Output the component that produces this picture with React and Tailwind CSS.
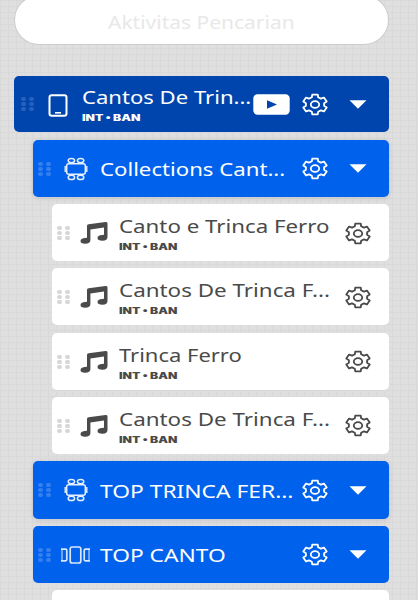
import { useLayoutEffect, useRef } from "react";
import clsx from "clsx";

const rows = [
  { type: "playlist", icon: "phone", title: "Cantos De Trin...", width: 169, sub: true },
  { type: "group", icon: "table", title: "Collections Cant...", width: 185 },
  { type: "song", icon: "music", title: "Canto e Trinca Ferro", width: 210, sub: true },
  { type: "song", icon: "music", title: "Cantos De Trinca F...", width: 211, sub: true },
  { type: "song", icon: "music", title: "Trinca Ferro", width: 123, sub: true },
  { type: "song", icon: "music", title: "Cantos De Trinca F...", width: 211, sub: true },
  { type: "group", icon: "table", title: "TOP TRINCA FER...", width: 194 },
  { type: "group", icon: "carousel", title: "TOP CANTO", width: 126 },
];

// Wide lettering: stretches the text to the given width
const WideText = ({ width, className, children }) => {
  const ref = useRef(null);

  useLayoutEffect(() => {
    const el = ref.current;
    el.style.transform = `scaleX(${width / el.offsetWidth})`;
  }, [width, children]);

  return (
    <div className={className} style={{ width }}>
      <span ref={ref} className="inline-block origin-left whitespace-nowrap">
        {children}
      </span>
    </div>
  );
};

const Handle = ({ className }) => (
  <div className={clsx("grid h-[14px] w-[13px] shrink-0 grid-cols-2 gap-x-[3px] gap-y-px", className)}>
    {[0, 1, 2, 3, 4, 5].map((dot) => (
      <span key={dot} className="rounded-[2px] bg-current" />
    ))}
  </div>
);

const Icon = ({ name }) => {
  if (name === "phone")
    return (
      <svg className="h-[23px] w-5" viewBox="0 0 20 23" fill="none" stroke="currentColor" strokeWidth="2">
        <rect x="1.5" y="1.2" width="17" height="20.6" rx="2.2" />
        <path d="M7 18.8h6" strokeWidth="1.6" />
      </svg>
    );
  if (name === "table")
    return (
      <svg className="h-6 w-6" viewBox="0 0 24 24" fill="none" stroke="currentColor" strokeWidth="1.5" opacity="0.9">
        <rect x="2.7" y="6.7" width="18.6" height="10.6" rx="2" />
        <ellipse cx="7.4" cy="3.6" rx="3.2" ry="2.2" />
        <ellipse cx="16.6" cy="3.6" rx="3.2" ry="2.2" />
        <ellipse cx="7.4" cy="20.4" rx="3.2" ry="2.2" />
        <ellipse cx="16.6" cy="20.4" rx="3.2" ry="2.2" />
        <path d="M1.2 9v6M22.8 9v6" strokeWidth="1.4" />
      </svg>
    );
  if (name === "carousel")
    return (
      <svg className="h-[18px] w-[29px]" viewBox="0 0 29 18" fill="none" stroke="currentColor" strokeWidth="1.7" opacity="0.85">
        <rect x="9.2" y="1" width="10.6" height="16" rx="2" />
        <path d="M0 3.2h4.6q1.2 0 1.2 1.2v9.2q0 1.2-1.2 1.2H0M29 3.2h-4.6q-1.2 0-1.2 1.2v9.2q0 1.2 1.2 1.2H29" />
        <path d="M1 3v12M28 3v12" strokeWidth="1" />
      </svg>
    );
  return (
    <svg className="h-[22px] w-7" viewBox="0 0 28 22" fill="currentColor">
      <path d="M7 3.8Q7 2.5 8.6 2.2L25.5 0Q27.5-.2 27.5 1.4V15Q27.5 18.7 22.5 18.7Q17.5 18.7 17.5 16Q17.5 13.3 22 13L24 12.7V5.6L10.4 7.6V18Q10.4 21.8 5 21.8Q.5 21.8.5 19.1Q.5 16.6 4.5 16.1L7 15.7Z" />
    </svg>
  );
};

const YoutubeBadge = () => (
  <svg className="h-[21px] w-[37px] shrink-0" viewBox="0 0 37 21">
    <rect x="0.3" y="0.3" width="36.4" height="20.4" rx="4.2" fill="white" />
    <path d="M14 6.2l10 4.3-10 4.3z" fill="#0045ad" />
  </svg>
);

// Six teeth, one every 60 degrees; each tooth is [angle offset, radius]
const gearPoints = [0, 60, 120, 180, 240, 300]
  .flatMap((tooth) =>
    [[-20, 7.7], [-13, 10.2], [13, 10.2], [20, 7.7]].map(([offset, r]) => {
      const a = ((tooth + offset) * Math.PI) / 180;
      return `${(13 + r * 1.2 * Math.sin(a)).toFixed(2)},${(11.5 - r * Math.cos(a)).toFixed(2)}`;
    })
  )
  .join(" ");

const Gear = () => (
  <svg className="h-[23px] w-[26px] shrink-0" viewBox="0 0 26 23" fill="none" stroke="currentColor" strokeWidth="1.8" strokeLinejoin="round">
    <polygon points={gearPoints} />
    <ellipse cx="13" cy="11.5" rx="4.2" ry="3.4" />
  </svg>
);

const Caret = () => (
  <svg className="h-[9px] w-[18px] shrink-0" viewBox="0 0 18 9">
    <path d="M.5.3h17L9 8.7z" fill="currentColor" />
  </svg>
);

const Row = ({ type, icon, title, width, sub }) => {
  const song = type === "song";
  return (
    <div
      className={clsx(
        "flex shrink-0 items-center rounded-[5px]",
        type === "playlist" && "h-14 bg-[#0045ad] pl-[7.5px] text-white",
        type === "group" && "ml-[19px] h-[57.5px] bg-[#0061ed] pt-px pl-[5.5px] text-white",
        song && "ml-[38px] h-[57px] bg-white pt-px pl-[5.5px] text-[#4a4a4a]",
        icon === "table" && "shadow-[0_1px_5px_#00000020]"
      )}
    >
      <Handle className={song ? "text-[#d6d6d6]" : type === "playlist" ? "text-[#2861bb]" : "text-[#357fef]"} />
      <div
        className={clsx(
          "flex shrink-0 items-center",
          type === "playlist" && "w-12 pl-[13.5px] pt-0.5",
          type === "group" && "w-[49px]",
          type === "group" && (icon === "table" ? "pl-[12.5px]" : "pl-[9.5px]"),
          song && "w-[48.5px] pl-[9.5px]"
        )}
      >
        <Icon name={icon} />
      </div>
      <div className="min-w-0 flex-1 pt-px">
        <WideText width={width} className="h-6 font-['Noto_Sans',sans-serif] text-[17.5px] leading-6">
          {title}
        </WideText>
        {sub && (
          <WideText width={59} className="mt-[3px] h-3 font-[Inter,sans-serif] text-[8.5px] leading-3 font-black">
            INT • BAN
          </WideText>
        )}
      </div>
      {type === "playlist" && <YoutubeBadge />}
      <div className={clsx("flex items-center", song ? "pr-[18.5px]" : "gap-[21px] pr-[22px] pl-[12px]")}>
        <Gear />
        {!song && <Caret />}
      </div>
    </div>
  );
};

export default function App() {
  return (
    <div className="h-[600px] w-[418px] overflow-hidden bg-[#dfdfdf] bg-[linear-gradient(#d9d9d9_1px,transparent_1px),linear-gradient(90deg,#d9d9d9_1px,transparent_1px)] bg-[size:8px_6px]">
      <div className="flex flex-col pr-[28.6px] pl-[13.8px]">
        <div className="-mt-1 ml-[1.2px] flex h-12 w-[373px] items-center justify-center rounded-full bg-white pb-px shadow-[0_0_0_1px_#ccc]">
          <WideText width={187} className="mt-1 font-['Noto_Sans',sans-serif] text-[17.5px] leading-6 text-[#e8e8e8]">
            Aktivitas Pencarian
          </WideText>
        </div>
        <div className="mt-[32.4px] flex flex-col gap-[7.2px]">
          {rows.map((row, i) => (
            <Row key={i} {...row} />
          ))}
          <div className="ml-[38px] h-14 rounded-[5px] bg-white" />
        </div>
      </div>
    </div>
  );
}
